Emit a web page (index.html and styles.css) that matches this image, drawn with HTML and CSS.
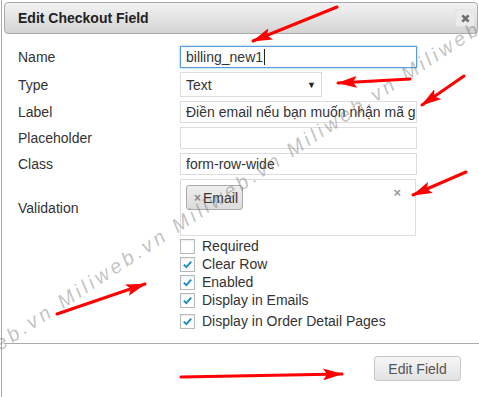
FILE: index.html
```html
<!DOCTYPE html>
<html lang="vi">
<head>
<meta charset="utf-8">
<title>Edit Checkout Field</title>
<link rel="stylesheet" href="styles.css">
</head>
<body>
<div class="dialog">
  <div class="titlebar">
    <span class="title">Edit Checkout Field</span>
    <span class="close"><svg viewBox="0 0 10 10"><path d="M1.5 1.5 L8.5 8.5 M8.5 1.5 L1.5 8.5"/></svg></span>
  </div>
  <div class="form">
    <div class="lbl">Name</div>
    <div class="field wide focus">billing_new1<span class="caret"></span></div>
    <div class="lbl">Type</div>
    <div class="field select"><span>Text</span><span class="arrow">&#9660;</span></div>
    <div class="lbl">Label</div>
    <div class="field wide">Điền email nếu bạn muốn nhận mã giảm giá</div>
    <div class="lbl">Placeholder</div>
    <div class="field wide"></div>
    <div class="lbl">Class</div>
    <div class="field wide">form-row-wide</div>
    <div class="lbl">Validation</div>
    <div class="multi">
      <span class="tag"><span class="tag-x">×</span>Email</span>
      <span class="clear">×</span>
    </div>
    <div class="checks">
      <div class="check"><span class="box"></span>Required</div>
      <div class="check"><span class="box on"><svg viewBox="0 0 15 15"><path d="M3.2 7.6 L6.2 10.6 L11.8 4.2"/></svg></span>Clear Row</div>
      <div class="check"><span class="box on"><svg viewBox="0 0 15 15"><path d="M3.2 7.6 L6.2 10.6 L11.8 4.2"/></svg></span>Enabled</div>
      <div class="check"><span class="box on"><svg viewBox="0 0 15 15"><path d="M3.2 7.6 L6.2 10.6 L11.8 4.2"/></svg></span>Display in Emails</div>
      <div class="check"><span class="box on"><svg viewBox="0 0 15 15"><path d="M3.2 7.6 L6.2 10.6 L11.8 4.2"/></svg></span>Display in Order Detail Pages</div>
    </div>
  </div>
  <div class="buttonpane">
    <span class="btn">Edit Field</span>
  </div>
</div>
<div class="watermark">eb.vn Miliweb.vn Miliweb.vn Miliweb.vn Miliweb.vn</div>
<svg class="arrows" width="479" height="397" viewBox="0 0 479 397">
  <defs>
    <marker id="ah" markerUnits="userSpaceOnUse" markerWidth="20" markerHeight="12" refX="19" refY="6" orient="auto">
      <path d="M0 0 L20 6 L0 12 L4 6 Z" fill="#f00"/>
    </marker>
  </defs>
  <g stroke="#f00" stroke-width="3" stroke-linecap="round" fill="none">
    <line x1="337" y1="7" x2="253" y2="41" marker-end="url(#ah)"/>
    <line x1="410" y1="79" x2="338" y2="83" marker-end="url(#ah)"/>
    <line x1="464" y1="76" x2="422" y2="105" marker-end="url(#ah)"/>
    <line x1="466" y1="172" x2="413" y2="195" marker-end="url(#ah)"/>
    <line x1="57" y1="314" x2="145" y2="284" marker-end="url(#ah)"/>
    <line x1="181" y1="377" x2="342" y2="374" marker-end="url(#ah)"/>
  </g>
</svg>
</body>
</html>
```
FILE: styles.css
```css
* { box-sizing: border-box; }
html, body { margin: 0; height: 100%; }
body {
  position: relative;
  overflow: hidden;
  font-family: "Liberation Sans", Arial, sans-serif;
  font-size: 14px;
  color: #333;
  background: #fff;
}
.dialog {
  margin-left: 1px;
  border-left: 1px solid #aaa;
  height: 397px;
  padding: 2px 0 0 2px;
}
.titlebar {
  display: flex;
  align-items: center;
  justify-content: space-between;
  height: 32px;
  margin-right: 1px;
  padding: 0 2px 0 13px;
  border: 1px solid #aaa;
  border-radius: 4px;
  background: linear-gradient(#f3f3f3, #d4d4d4);
}
.title { font-weight: bold; color: #222; }
.close {
  display: flex;
  align-items: center;
  justify-content: center;
  width: 20px;
  height: 18px;
  border-radius: 3px;
  background: #ebebeb;
  border: 1px solid #e2e2e2;
}
.close svg { width: 9px; height: 9px; display: block; }
.close svg path { stroke: #6e6e6e; stroke-width: 3; fill: none; }
.form {
  display: grid;
  grid-template-columns: 162px auto;
  align-items: center;
  row-gap: 4px;
  padding: 12px 0 0 14px;
}
.lbl { color: #333; }
.field {
  height: 22px;
  border: 1px solid #ddd;
  padding: 0 5px;
  line-height: 20px;
  white-space: nowrap;
  overflow: hidden;
  color: #333;
  background: #fff;
}
.wide { width: 237px; }
.focus {
  border-color: #5b9dd9;
  box-shadow: 0 0 2px rgba(30, 140, 190, 0.6);
}
.caret {
  display: inline-block;
  width: 1px;
  height: 16px;
  margin-left: 1px;
  vertical-align: -3px;
  background: #222;
}
.select {
  display: flex;
  justify-content: space-between;
  align-items: center;
  width: 142px;
  height: 25px;
  padding: 0 5px 0 5px;
}
.select .arrow { font-size: 9px; color: #222; }
.multi {
  position: relative;
  width: 236px;
  height: 57px;
  border: 1px solid #ddd;
  padding: 5px 0 0 5px;
}
.tag {
  display: inline-flex;
  align-items: center;
  height: 25px;
  width: 57px;
  padding-left: 7px;
  border: 1px solid #aaa;
  border-radius: 3px;
  background: linear-gradient(#eee, #dcdcdc);
  color: #333;
}
.tag-x { color: #888; font-weight: bold; font-size: 12px; margin-right: 2px; }
.clear {
  position: absolute;
  right: 14px;
  top: 5px;
  color: #999;
  font-weight: bold;
  font-size: 13px;
}
.checks {
  grid-column: 2;
  margin-top: -3px;
}
.check {
  display: flex;
  align-items: center;
  height: 18px;
}
.check:last-child { height: 20px; align-items: flex-end; }
.box {
  display: inline-block;
  width: 15px;
  height: 15px;
  margin-right: 7px;
  border: 1px solid #b4b9be;
  background: #fff;
  box-shadow: inset 0 1px 2px rgba(0, 0, 0, 0.08);
}
.box svg { display: block; width: 13px; height: 13px; }
.box svg path { fill: none; stroke: #1e8cbe; stroke-width: 2.2; }
.buttonpane {
  display: flex;
  justify-content: flex-end;
  margin-top: 14px;
  border-top: 1px solid #aaa;
  padding: 12px 18px 0 0;
}
.btn {
  display: flex;
  align-items: center;
  justify-content: center;
  width: 87px;
  height: 25px;
  border: 1px solid #c8c8c8;
  border-radius: 3px;
  background: linear-gradient(#f6f6f6, #e2e2e2);
  color: #555;
}
.watermark {
  position: absolute;
  left: -10px;
  top: 336px;
  transform: rotate(-33.5deg);
  transform-origin: 0 0;
  white-space: nowrap;
  font-style: italic;
  font-size: 20px;
  letter-spacing: 3.5px;
  color: rgba(120, 120, 120, 0.45);
  pointer-events: none;
}
.arrows {
  position: absolute;
  left: 0;
  top: 0;
  pointer-events: none;
}
```
